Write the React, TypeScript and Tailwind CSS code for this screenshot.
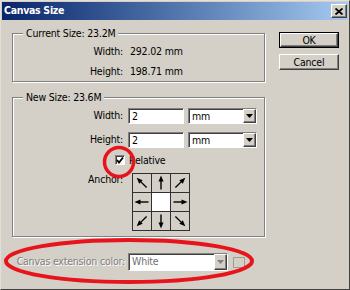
import React from 'react';

const raised =
  'bg-[#d4d0c8] border border-t-white border-l-white border-r-[#404040] border-b-[#404040] shadow-[inset_-1px_-1px_0_#808080]';
const sunken =
  'bg-white border border-t-[#808080] border-l-[#808080] border-r-white border-b-white shadow-[inset_1px_1px_0_#404040]';
const etched = 'border border-[#808080] shadow-[inset_1px_1px_0_#fff,1px_1px_0_#fff]';

function DropArrow({ disabled }: { disabled?: boolean }) {
  return (
    <div className={`${raised} w-[13px] h-full flex items-center justify-center`}>
      <svg width="7" height="4" viewBox="0 0 7 4">
        <polygon points="0,0 7,0 3.5,4" fill={disabled ? '#808080' : '#000'} />
      </svg>
    </div>
  );
}

function Select({ value, className, disabled }: { value: string; className: string; disabled?: boolean }) {
  return (
    <div className={`${sunken} ${className} flex items-stretch`}>
      <span className={`flex-1 pl-[3px] leading-[14px] ${disabled ? 'text-[#707070]' : 'text-black'}`}>{value}</span>
      <DropArrow disabled={disabled} />
    </div>
  );
}

// base arrow points up, rotated about the cell centre
function Arrow({ angle }: { angle: number }) {
  return (
    <svg width="18" height="18" viewBox="0 0 18 18">
      <g transform={`rotate(${angle} 9 9)`}>
        <line x1="9" y1="15.5" x2="9" y2="6" stroke="#000" strokeWidth="1.4" />
        <polygon points="9,1.5 6.5,7.5 11.5,7.5" fill="#000" />
      </g>
    </svg>
  );
}

function AnchorGrid() {
  const angles = [-45, 0, 45, -90, null, 90, -135, 180, 135];
  return (
    <div className="grid grid-cols-[18px_18px_18px] grid-rows-[18px_18px_18px] gap-px bg-[#303030] border border-[#303030] w-[58px] h-[58px]">
      {angles.map((a, i) =>
        a === null ? (
          <div key={i} className="bg-white" />
        ) : (
          <div key={i} className="bg-[#d4d0c8] flex items-center justify-center">
            <Arrow angle={a} />
          </div>
        )
      )}
    </div>
  );
}

export default function App() {
  return (
    <div className="relative w-[350px] h-[290px] bg-[#d4d0c8] border border-t-[#e4e0d8] border-l-[#e4e0d8] border-r-[#404040] border-b-[#404040] p-px text-[10.5px] tracking-[-0.2px] text-black font-['DejaVu_Sans_Condensed','DejaVu_Sans',sans-serif] overflow-hidden">
      {/* title bar */}
      <div className="h-[18px] bg-linear-to-r from-[#0a246a] to-[#a6caf0] flex items-center justify-between pl-[2px] pr-[1px]">
        <span className="text-white font-bold text-[10.5px] tracking-[-0.3px]">Canvas Size</span>
        <div className={`${raised} w-[16px] h-[14px] flex items-center justify-center`}>
          <svg width="8" height="7" viewBox="0 0 8 7">
            <path d="M0.5 0.5 L7.5 6.5 M7.5 0.5 L0.5 6.5" stroke="#000" strokeWidth="1.8" />
          </svg>
        </div>
      </div>

      <div className="flex pl-[10px] pt-[7px]">
        <div className="w-[253px] flex flex-col">
          <fieldset className={`${etched} w-[253px]`}>
            <legend className="ml-[10px] px-[3px] leading-[12px] bg-[#d4d0c8]">Current Size: 23.2M</legend>
            <div className="grid grid-cols-[110px_auto] gap-x-[7px] pt-[2px] leading-[20px]">
              <span className="text-right">Width:</span>
              <span>292.02 mm</span>
              <span className="text-right">Height:</span>
              <span>198.71 mm</span>
            </div>
          </fieldset>

          <fieldset className={`${etched} w-[253px] mt-[9px] pb-[5px]`}>
            <legend className="ml-[10px] px-[3px] leading-[12px] bg-[#d4d0c8]">New Size: 23.6M</legend>
            <div className="flex items-center mt-[5px] h-[16px]">
              <span className="w-[110px] text-right">Width:</span>
              <div className={`${sunken} ml-[5px] w-[56px] h-[16px] pl-[3px] leading-[14px]`}>2</div>
              <Select value="mm" className="ml-[4px] w-[69px] h-[16px]" />
            </div>
            <div className="flex items-center mt-[8px] h-[16px]">
              <span className="w-[110px] text-right">Height:</span>
              <div className={`${sunken} ml-[5px] w-[56px] h-[16px] pl-[3px] leading-[14px]`}>2</div>
              <Select value="mm" className="ml-[4px] w-[69px] h-[16px]" />
            </div>
            <div className="flex items-center mt-[6px] h-[12px] pl-[102px] gap-[4px]">
              <div className={`${sunken} w-[10px] h-[10px] flex items-center justify-center`}>
                <svg width="8" height="8" viewBox="0 0 8 8">
                  <polyline points="1,4 3,6.5 7,1.5" fill="none" stroke="#000" strokeWidth="1.8" />
                </svg>
              </div>
              <span className="leading-[12px]">Relative</span>
            </div>
            <div className="flex items-start mt-[7px]">
              <span className="w-[110px] text-right leading-[12px]">Anchor:</span>
              <div className="ml-[9px]">
                <AnchorGrid />
              </div>
            </div>
          </fieldset>

          <div className="flex items-center mt-[16px] h-[18px]">
            <div className="w-[113px] flex justify-end">
              <span className="shrink-0 whitespace-nowrap text-[#808080] [text-shadow:1px_1px_0_#fff]">Canvas extension color:</span>
            </div>
            <Select value="White" disabled className="ml-[3px] w-[100px] h-[18px]" />
            <div className="ml-[5px] w-[12px] h-[11px] border border-[#a09c94]" />
          </div>
        </div>

        <div className="ml-[14px] mt-[5px] flex flex-col gap-[6px]">
          <div className="border border-black w-[60px] h-[16px]">
            <div className={`${raised} w-full h-full flex items-center justify-center leading-none`}>OK</div>
          </div>
          <div className={`${raised} w-[60px] h-[16px] flex items-center justify-center leading-none`}>Cancel</div>
        </div>
      </div>

      {/* red annotation marks */}
      <svg className="absolute left-0 top-0 pointer-events-none" width="350" height="290" viewBox="0 0 350 290">
        <circle cx="118" cy="161" r="14.5" fill="none" stroke="#e8141c" strokeWidth="3.5" />
        <ellipse cx="128" cy="260" rx="123" ry="21" fill="none" stroke="#e8141c" strokeWidth="4" />
      </svg>
    </div>
  );
}
